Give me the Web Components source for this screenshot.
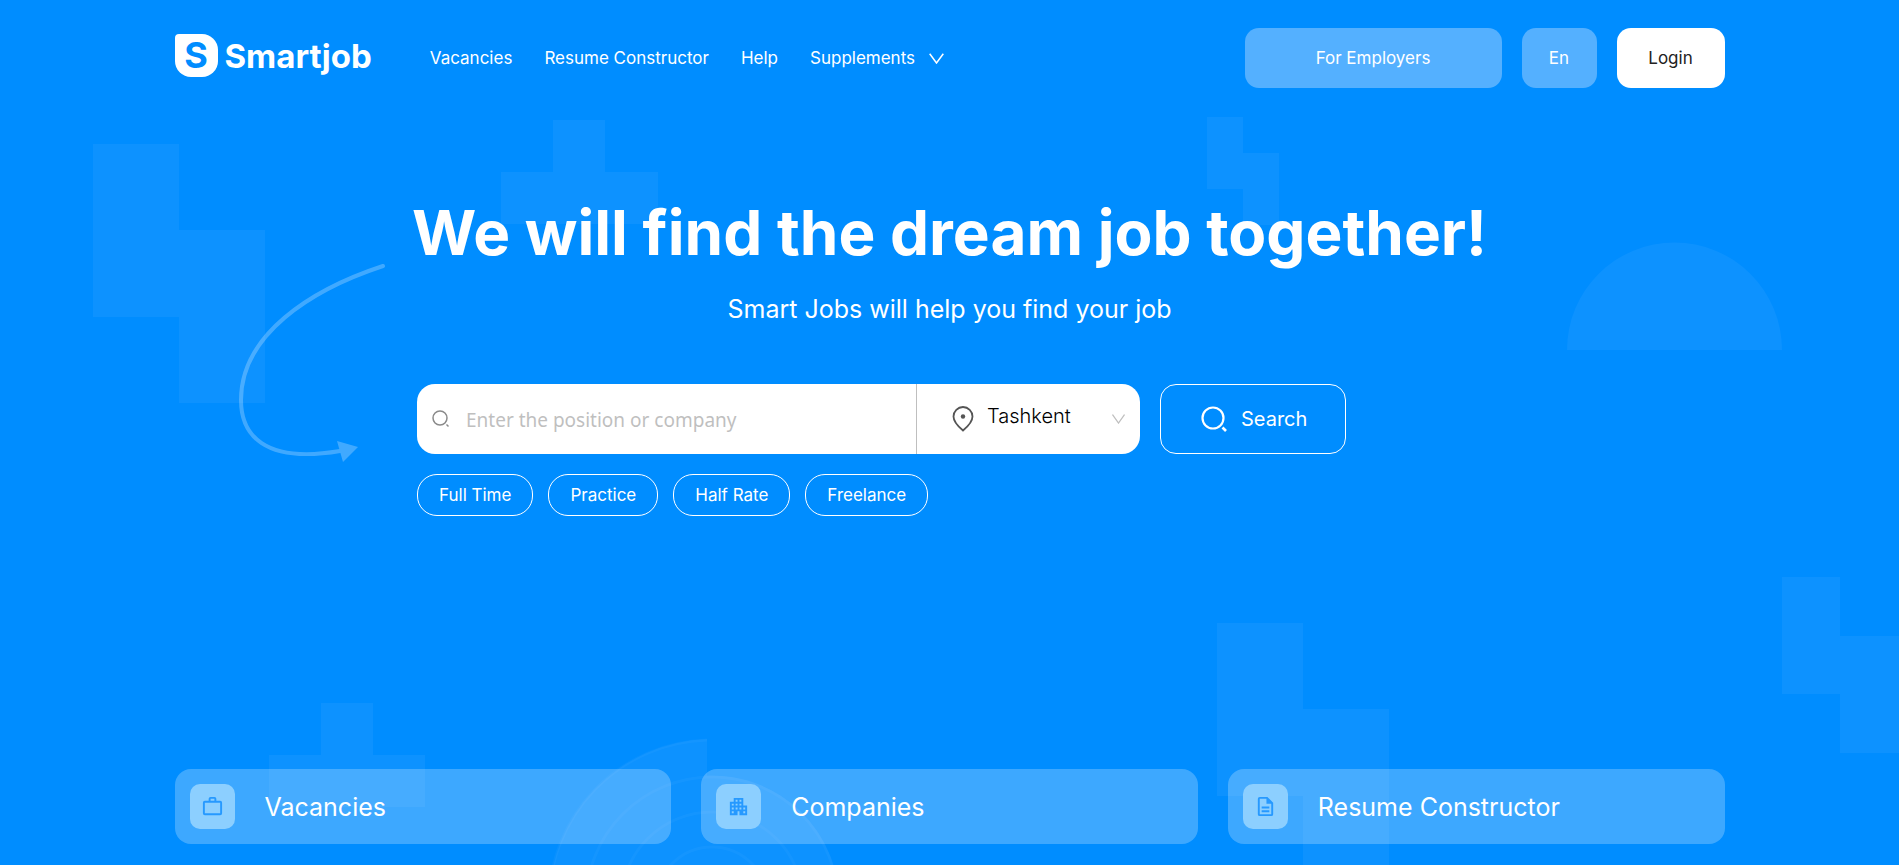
<!DOCTYPE html>
<html lang="en">
<head>
<meta charset="utf-8">
<title>Smartjob</title>
<style>
  body { margin: 0; background: #008dff; font-family: Inter, "Liberation Sans", sans-serif; color: #fff; }
</style>
</head>
<body>
<smart-page></smart-page>
<script>
const define = (name, html, setup) => {
  const template = document.createElement('template');
  template.innerHTML = '<style>*{box-sizing:border-box} svg{display:block;flex:none}</style>' + html;
  customElements.define(name, class extends HTMLElement {
    constructor() {
      super();
      this.attachShadow({ mode: 'open' }).append(template.content.cloneNode(true));
    }
    connectedCallback() { if (setup) setup(this, this.shadowRoot); }
  });
};

/* Decorative shapes behind the content */
define('hero-art', `
<style>
  :host { position: absolute; inset: 0; overflow: hidden; pointer-events: none; }
  svg { width: 100%; height: 100%; }
</style>
<svg viewBox="0 0 1899 865" preserveAspectRatio="xMidYMin slice" aria-hidden="true">
  <g fill="#fff" fill-opacity=".05">
    <path d="M93 144h86v86h86v173h-86v-86H93z"/>
    <path d="M553 120h52v52h53v52H501v-52h52z"/>
    <path d="M1207 117h36v36h36v72h-36v-36h-36z"/>
    <path d="M1567 350a107.500 107.500 0 0 1 215 0z"/>
    <path d="M1782 577h58v59h59v117h-59v-59h-58z"/>
    <path d="M1217 623h86v86h86v173h-86v-86h-86z"/>
    <path d="M321 703h52v52h52v52H269v-52h52z"/>
    <path d="M707 739v36.500A127 127 0 0 1 839 903H549A164 164 0 0 1 707 739z"/>
  </g>
  <g fill="none" stroke="#fff" stroke-opacity=".03" stroke-width="3">
    <path d="M707 740A163 163 0 0 0 549 903"/>
    <circle cx="712" cy="903" r="126"/>
    <circle cx="712" cy="903" r="91"/>
    <circle cx="712" cy="903" r="56"/>
  </g>
  <g opacity=".25">
    <path d="M383 266C310 290 241 335 241 400C241 434 263 464 340 451" fill="none" stroke="#fff" stroke-width="4" stroke-linecap="round"/>
    <path d="M337 441L358 447L343 462z" fill="#fff"/>
  </g>
</svg>`);

define('smart-logo', `
<style>
  :host { display: block; }
  a { display: flex; align-items: center; gap: 7px; padding-bottom: 5px; color: #fff; text-decoration: none; font: 700 33px/44px Inter, sans-serif; }
  b { width: 43px; height: 43px; border-radius: 4px 16px 16px 16px; background: #fff; color: #008dff; font: 700 36px/43px Inter, sans-serif; text-align: center; }
</style>
<a href="#"><b>S</b><span>Smartjob</span></a>`);

define('nav-link', `
<style>
  :host { display: block; }
  a { display: flex; align-items: center; gap: 14px; color: #fff; text-decoration: none; font-size: 17px; line-height: 24px; white-space: nowrap; }
  svg { display: none; }
  :host([menu]) svg { display: block; }
</style>
<a href="#"><slot></slot><svg width="15" height="11" viewBox="0 0 15 11" fill="none" stroke="#fff" stroke-width="1.500"><path d="M.7.7L7.500 10L14.300.7"/></svg></a>`);

define('head-button', `
<style>
  :host { display: block; }
  button { width: 108px; height: 60px; padding: 0; border: 0; border-radius: 14px; background: #54b0ff; color: #fff; font: 400 17px/24px Inter, sans-serif; }
  :host([variant=wide]) button { width: 257px; }
  :host([variant=small]) button { width: 75px; }
  :host([variant=solid]) button { background: #fff; color: #222; }
</style>
<button type="button"><slot></slot></button>`);

define('site-header', `
<style>
  :host { display: flex; align-items: center; height: 60px; }
  nav { display: flex; gap: 32px; margin-left: 58px; }
  div { display: flex; gap: 20px; margin-left: auto; }
</style>
<smart-logo></smart-logo>
<nav>
  <nav-link>Vacancies</nav-link>
  <nav-link>Resume Constructor</nav-link>
  <nav-link>Help</nav-link>
  <nav-link menu>Supplements</nav-link>
</nav>
<div>
  <head-button variant="wide">For Employers</head-button>
  <head-button variant="small">En</head-button>
  <head-button variant="solid">Login</head-button>
</div>`);

define('job-search', `
<style>
  :host { display: block; }
  form { display: flex; gap: 20px; height: 70px; }
  .box { display: flex; width: 723px; border-radius: 18px; background: #fff; overflow: hidden; }
  label { display: flex; align-items: center; }
  .what { flex: 1; gap: 16px; padding-left: 15px; border-right: 1px solid #bfbfbf; }
  .where { width: 223px; padding: 0 15px 0 35px; gap: 13px; }
  input { flex: 1; min-width: 0; height: 70px; padding: 2px 0 0; border: 0; outline: 0; background: none; font: 400 19px/28px "Noto Sans", "Open Sans", sans-serif; color: #222; }
  input::placeholder { color: #bfbfbf; opacity: 1; }
  select { appearance: none; flex: 1; min-width: 0; height: 64px; margin-bottom: 6px; padding: 0; border: 0; outline: 0; background: none; font: 300 20px/28px Inter, sans-serif; color: #000; }
  button { display: flex; align-items: center; gap: 13px; padding: 0 38px 0 40px; border: 1px solid #fff; border-radius: 16px; background: none; color: #fff; font: 400 20px/28px Inter, sans-serif; }
</style>
<form>
  <div class="box">
    <label class="what">
      <svg width="18" height="18" viewBox="0 0 18 18" fill="none" stroke="#8a8a8a" stroke-width="1.500"><circle cx="8" cy="8" r="7"/><path d="M14.500 14.500l2 2"/></svg>
      <input type="text" placeholder="Enter the position or company" aria-label="Position or company">
    </label>
    <label class="where">
      <svg width="22" height="26" viewBox="0 0 22 26" fill="none" stroke="#555" stroke-width="1.800"><path d="M11 24.500C8 22 1.500 16 1.500 10.500a9.500 9.500 0 0 1 19 0C20.500 16 14 22 11 24.500z"/><circle cx="11" cy="10.500" r="2.200" fill="#555" stroke="none"/></svg>
      <select aria-label="City"><option>Tashkent</option></select>
      <svg width="13" height="10" viewBox="0 0 13 10" fill="none" stroke="#bfbfbf" stroke-width="1.300"><path d="M.5.5L6.500 9L12.500.5"/></svg>
    </label>
  </div>
  <button type="button">
    <svg width="27" height="27" viewBox="0 0 27 27" fill="none" stroke="#fff" stroke-width="2.200"><circle cx="12" cy="12" r="10.500"/><path d="M21.500 21.500l3.500 3.500" stroke-width="2.600"/></svg>
    Search
  </button>
</form>`);

define('tag-button', `
<style>
  :host { display: block; }
  button { height: 42px; padding: 0 21px; border: 1px solid #fff; border-radius: 20px; background: none; color: #fff; font: 400 17px/24px Inter, sans-serif; }
</style>
<button type="button"><slot></slot></button>`);

const icons = {
  bag: '<path fill-rule="evenodd" d="M4 6h4V4q0-2 2-2h4q2 0 2 2v2h4q2 0 2 2v11q0 2-2 2H4q-2 0-2-2V8q0-2 2-2zm6 0h4V4h-4zM4 8v11h16V8z"/>',
  building: '<path fill-rule="evenodd" d="M17 11V3H7v4H3v14h8v-4h2v4h8V11zM7 19H5v-2h2zm0-4H5v-2h2zm0-4H5V9h2zm4 4H9v-2h2zm0-4H9V9h2zm0-4H9V5h2zm4 8h-2v-2h2zm0-4h-2V9h2zm0-4h-2V5h2zm4 12h-2v-2h2zm0-4h-2v-2h2z"/>',
  doc: '<path fill-rule="evenodd" d="M6 2h8l6 6v12q0 2-2 2H6q-2 0-2-2V4q0-2 2-2zm0 2v16h12V9h-5V4zM8 12h8v2H8zm0 4h8v2H8z"/>'
};
define('category-card', `
<style>
  :host { display: block; flex: 1 1 0; }
  a { display: flex; align-items: center; gap: 30px; height: 75px; padding: 0 15px; border-radius: 16px; background: rgba(255,255,255,.24); color: #fff; text-decoration: none; font-size: 25px; line-height: 32px; }
  i { display: grid; place-items: center; width: 45px; height: 45px; border-radius: 10px; background: #8ccfff; }
</style>
<a href="#"><i><svg width="23" height="23" viewBox="0 0 24 24" fill="#2699ff"></svg></i><slot></slot></a>`,
(host, root) => { root.querySelector('i svg').innerHTML = icons[host.getAttribute('icon')]; });

define('smart-page', `
<style>
  :host { display: block; position: relative; min-height: 100vh; overflow: hidden; }
  main, site-header, .cards { position: relative; width: calc(100% - 40px); max-width: 1550px; margin: 0 auto; }
  site-header { margin-top: 28px; }
  main { max-width: 1065px; padding-top: 105px; }
  h1 { display: flex; justify-content: center; margin: 0; font-size: 62px; line-height: 80px; font-weight: 700; white-space: nowrap; }
  p { margin: 18px 0 0; font-size: 25px; line-height: 36px; text-align: center; }
  job-search { margin-top: 57px; }
  .tags { display: flex; gap: 15px; margin-top: 20px; }
  .cards { display: flex; gap: 30px; margin-top: 253px; padding-bottom: 21px; }
</style>
<hero-art></hero-art>
<site-header></site-header>
<main>
  <h1>We will find the dream job together!</h1>
  <p>Smart Jobs will help you find your job</p>
  <job-search></job-search>
  <div class="tags">
    <tag-button>Full Time</tag-button>
    <tag-button>Practice</tag-button>
    <tag-button>Half Rate</tag-button>
    <tag-button>Freelance</tag-button>
  </div>
</main>
<div class="cards">
  <category-card icon="bag">Vacancies</category-card>
  <category-card icon="building">Companies</category-card>
  <category-card icon="doc">Resume Constructor</category-card>
</div>`);
</script>
</body>
</html>
